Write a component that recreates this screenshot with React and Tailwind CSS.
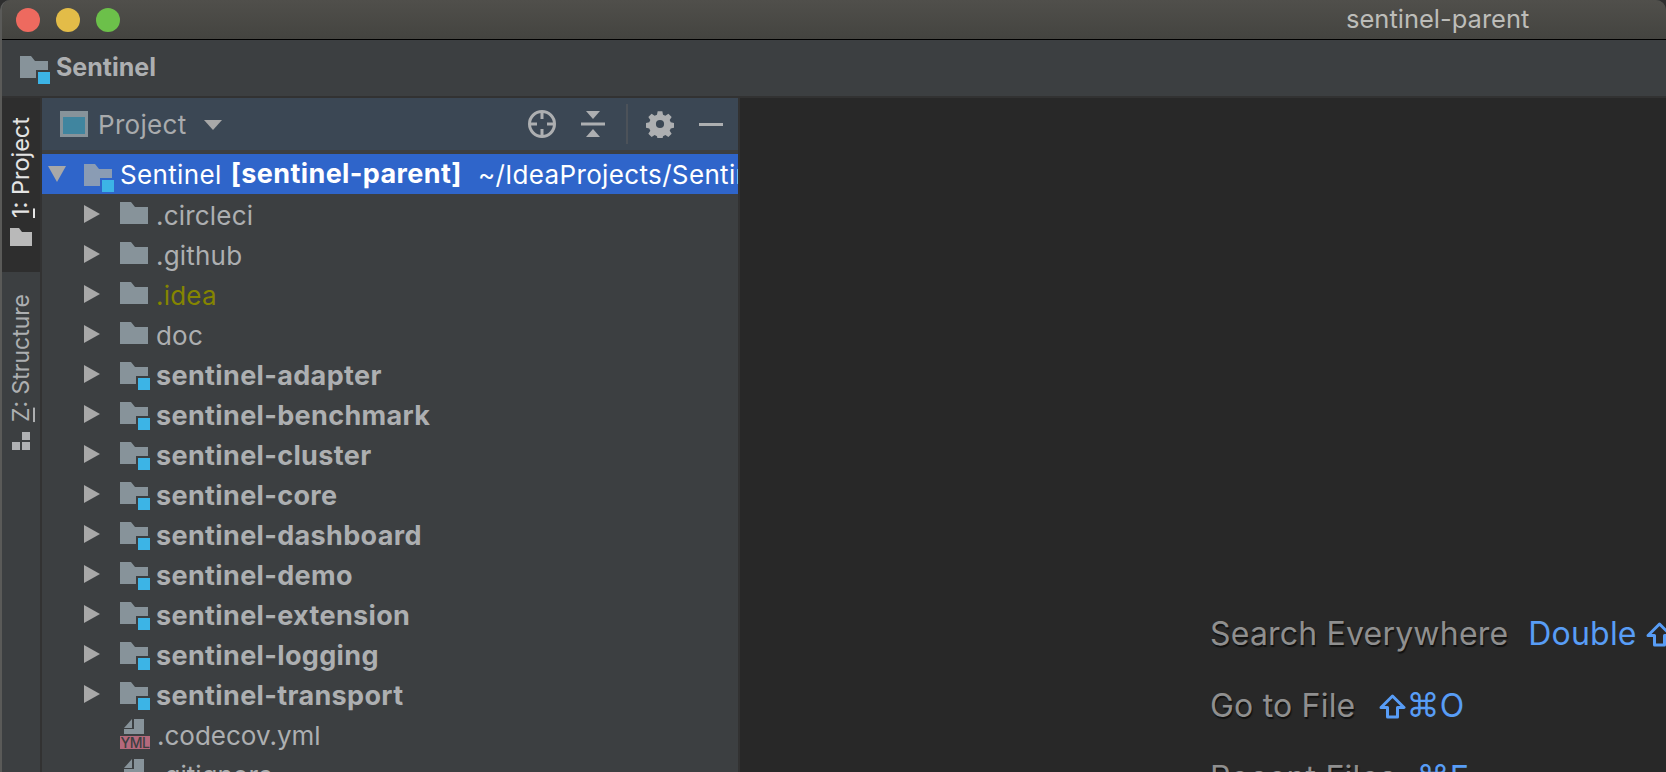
const font = { fontFamily: 'Inter, "Noto Sans", sans-serif' };

function Folder({ module, color = "#87939a", edge = "border-[#3c3f41]" }) {
  return (
    <span className="relative block w-[30px] h-[28px] shrink-0">
      <svg width="28" height="22" viewBox="0 0 28 22" className="absolute left-0 top-0">
        <path d="M0 0H11L15 5H28V22H0Z" fill={color} />
      </svg>
      {module && <span className={`absolute left-[16px] top-[14px] w-4 h-4 bg-[#3cb4e6] border-2 ${edge}`} />}
    </span>
  );
}

function Chevron() {
  return (
    <svg width="16" height="18" viewBox="0 0 16 18" className="shrink-0">
      <path d="M0 0L16 9L0 18Z" fill="#a8a8a8" />
    </svg>
  );
}

function TreeRow({ name, module, color = "text-[#adafb1]" }) {
  return (
    <div className="h-10 shrink-0 flex items-center pl-[42px]">
      <Chevron />
      <div className="ml-[20px] w-[36px] h-[28px] pt-[2px] shrink-0">
        <Folder module={module} />
      </div>
      <span className={`whitespace-nowrap ${module ? "pt-[4px] font-bold text-[27px] tracking-[0.35px]" : "pt-[2px] font-normal text-[26px] tracking-[0.2px]"} ${color}`}>{name}</span>
    </div>
  );
}

function FileRow({ name, yml }) {
  return (
    <div className="h-10 shrink-0 flex items-center pl-[78px]">
      <div className="relative w-[36px] h-[30px] mr-[1px] shrink-0">
        <svg width="20" height="15" viewBox="0 0 20 15" className="absolute left-[4px] top-0">
          <path d="M10 0H20V15H0V10H10Z" fill="#87939a" />
          <path d="M0 9L8 0V9Z" fill="#87939a" />
        </svg>
        {yml && (
          <span className="absolute left-0 top-[17px] w-[30px] h-[13px] bg-[#b5697c] text-[#3c3f41] text-[14px] leading-[13px] font-medium text-center tracking-[-0.4px]">YML</span>
        )}
      </div>
      <span className="pt-[2px] text-[26px] text-[#adafb1] whitespace-nowrap">{name}</span>
    </div>
  );
}

function ShiftKey() {
  return (
    <svg width="27" height="25" viewBox="0 0 27 25" className="inline-block align-[-2px]" fill="none" stroke="#589df6" strokeWidth="3" strokeLinejoin="round">
      <path d="M13.5 2L25 13.5H18.5V23H8.5V13.5H2Z" />
    </svg>
  );
}

function Hint({ label, keys, gap = "ml-[20px]" }) {
  return (
    <div className="h-[72px] flex items-center whitespace-nowrap text-[32px] tracking-[0.2px]">
      <span className="text-[#8f8f8f] [text-shadow:1px_2px_1px_#111]">{label}</span>
      <span className={`${gap} text-[#589df6]`}>{keys}</span>
    </div>
  );
}

export default function App() {
  const modules = ["adapter", "benchmark", "cluster", "core", "dashboard", "demo", "extension", "logging", "transport"];
  return (
    <div className="w-[1666px] h-[772px] bg-[#2e2e2e]">
      <div style={font} className="w-full h-full overflow-hidden flex flex-col bg-[#3c3f41] border-l-2 border-[#5a5a58] rounded-t-[10px]">
        <div className="h-[39px] shrink-0 flex items-center pl-[14px] bg-gradient-to-b from-[#504f4b] to-[#444440] relative">
          <div className="flex gap-[16px]">
            <span className="w-6 h-6 rounded-full bg-[#ee6a5f]" />
            <span className="w-6 h-6 rounded-full bg-[#e3bc48]" />
            <span className="w-6 h-6 rounded-full bg-[#6cc04a]" />
          </div>
          <span className="ml-[1226px] pb-[1px] text-[25.5px] text-[#bdbdb9] whitespace-nowrap">sentinel-parent</span>
        </div>
        <div className="h-px shrink-0 bg-black" />
        <div className="h-[56px] shrink-0 flex items-center pl-[18px] pt-[4px] bg-[#3c3f41]">
          <Folder module />
          <span className="ml-[6px] text-[25px] font-bold text-[#adafb1] pb-[4px]">Sentinel</span>
        </div>
        <div className="flex-1 min-h-0 flex border-t-2 border-[#323232]">
          <div className="w-[40px] shrink-0 flex flex-col bg-[#3c3f41] border-r-2 border-[#323232]">
            <div className="h-[174px] shrink-0 bg-[#2e2e2e] flex flex-col items-center justify-end pb-[26px] gap-[10px]">
              <span className="[writing-mode:vertical-rl] rotate-180 text-[23.5px] leading-none text-[#e4e4e4] whitespace-nowrap"><span className="underline">1</span>: Project</span>
              <svg width="22" height="18" viewBox="0 0 22 18"><path d="M0 0H9L12 4H22V18H0Z" fill="#b9b9b9" /></svg>
            </div>
            <div className="flex flex-col items-center pt-[22px] gap-[10px]">
              <span className="[writing-mode:vertical-rl] rotate-180 text-[23px] leading-none text-[#adafb1] whitespace-nowrap"><span className="underline">Z</span>: Structure</span>
              <svg width="18" height="18" viewBox="0 0 18 18"><path d="M10 0H18V8H10ZM0 10H8V18H0ZM10 10H18V18H10Z" fill="#afb1b3" /></svg>
            </div>
          </div>
          <div className="w-[696px] shrink-0 flex flex-col overflow-hidden bg-[#3c3f41]">
            <div className="h-[52px] shrink-0 bg-[#3b4754] flex items-center pl-[18px]">
              <span className="block w-[28px] h-[26px] border-[3px] border-[#87939a] bg-[#40859f] border-t-[6px]" />
              <span className="ml-[10px] text-[26px] tracking-[0.3px] text-[#a9abad]">Project</span>
              <svg width="18" height="10" viewBox="0 0 18 10" className="ml-[18px] mt-[2px]"><path d="M0 0H18L9 10Z" fill="#a8a8a8" /></svg>
              <svg width="30" height="30" viewBox="0 0 30 30" className="ml-[305px]" fill="none" stroke="#adafb1" strokeWidth="3">
                <circle cx="15" cy="15" r="12.5" />
                <path d="M15 2V10M15 20V28M2 15H10M20 15H28" />
              </svg>
              <svg width="26" height="26" viewBox="0 0 26 26" className="ml-[23px]">
                <path d="M6 0H20L13 8ZM1 11.5H25V14.5H1ZM13 18L20 26H6Z" fill="#adafb1" />
              </svg>
              <span className="ml-[20px] w-[2px] h-10 bg-[#4c5259]" />
              <svg width="28" height="28" viewBox="0 0 24 24" className="ml-[18px]">
                <path fillRule="evenodd" fill="#adafb1" d="M10 1h4l.6 3 2 .9 2.6-1.7 2.8 2.8-1.7 2.6.9 2 3 .6v4l-3 .6-.9 2 1.7 2.6-2.8 2.8-2.6-1.7-2 .9-.6 3h-4l-.6-3-2-.9-2.6 1.7-2.8-2.8 1.7-2.6-.9-2-3-.6v-4l3-.6.9-2L2 6l2.8-2.8 2.6 1.7 2-.9ZM12 8.5a3.5 3.5 0 1 0 0 7 3.5 3.5 0 0 0 0-7Z" />
              </svg>
              <span className="ml-[25px] w-[24px] h-[3px] bg-[#adafb1]" />
            </div>
            <div className="h-1 shrink-0" />
            <div className="h-10 shrink-0 bg-[#2f65ca] flex items-center pl-[6px] whitespace-nowrap text-white">
              <svg width="18" height="16" viewBox="0 0 18 16" className="shrink-0"><path d="M0 0H18L9 16Z" fill="#a8a8a8" /></svg>
              <div className="ml-[18px] w-[36px] h-[28px] pt-[4px] shrink-0">
                <Folder module color="#8a9cb4" edge="border-[#2f65ca]" />
              </div>
              <span className="font-normal text-[26px] tracking-[0.35px]">Sentinel</span>
              <span className="ml-[9px] font-bold text-[27px] tracking-[0.4px]">[sentinel-parent]</span>
              <span className="ml-[16px] font-normal text-[26px] tracking-[0.35px]">~/IdeaProjects/Sentinel</span>
            </div>
            <TreeRow name=".circleci" />
            <TreeRow name=".github" />
            <TreeRow name=".idea" color="text-[#858500]" />
            <TreeRow name="doc" />
            {modules.map((m) => <TreeRow key={m} name={`sentinel-${m}`} module />)}
            <FileRow name=".codecov.yml" yml />
            <FileRow name=".gitignore" />
          </div>
          <div className="flex-1 min-w-0 overflow-hidden bg-[#282828] border-l-2 border-[#323232] pl-[470px] pt-[500px]">
            <Hint label="Search Everywhere" keys={<>Double <ShiftKey /></>} />
            <Hint label="Go to File" gap="ml-[24px]" keys={<><ShiftKey /><span className="text-[33px]" style={{ fontFamily: '"DejaVu Sans"' }}>⌘</span>O</>} />
            <Hint label="Recent Files" keys={<><span className="text-[33px]" style={{ fontFamily: '"DejaVu Sans"' }}>⌘</span>E</>} />
          </div>
        </div>
      </div>
    </div>
  );
}
